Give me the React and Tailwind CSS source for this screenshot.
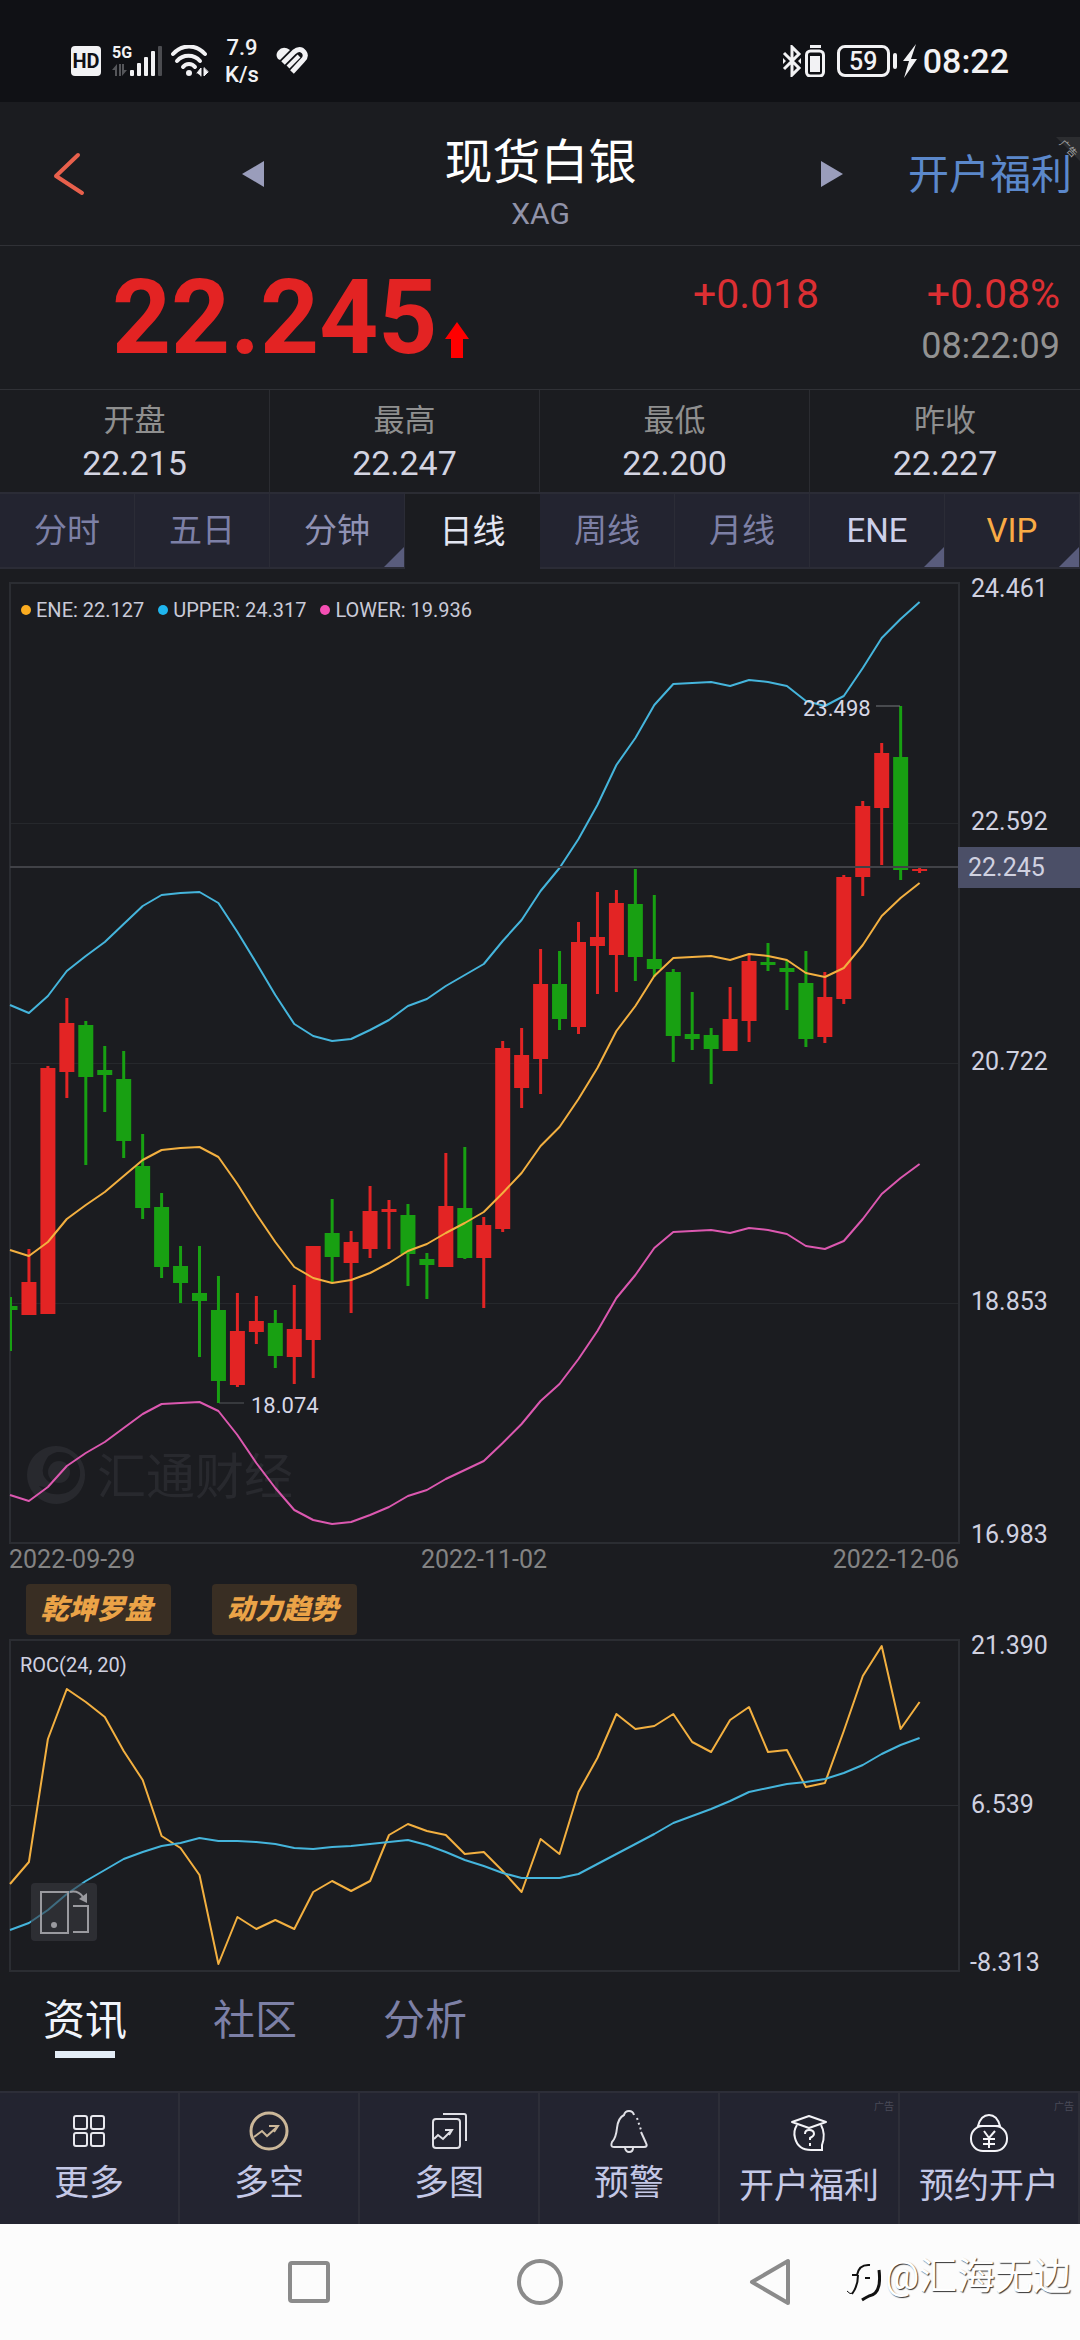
const STEP = 18.95;

// [high, body top, body bottom, low, rising]
const CANDLES = [
    [714, 723, 727, 768, 0], [666, 699, 732, 732, 1], [483, 485, 731, 731, 1], [415, 440, 489, 515, 1],
    [438, 442, 494, 582, 0], [463, 487, 492, 529, 0], [468, 496, 558, 575, 0], [551, 583, 625, 636, 0],
    [610, 624, 684, 695, 0], [663, 683, 700, 720, 0], [663, 710, 718, 774, 0], [693, 727, 798, 820, 0],
    [710, 748, 802, 804, 1], [713, 738, 749, 761, 1], [727, 740, 773, 785, 0], [702, 746, 774, 801, 1],
    [663, 663, 757, 795, 1], [616, 650, 674, 700, 0], [648, 659, 680, 730, 1], [603, 628, 666, 675, 1],
    [617, 626, 629, 666, 1], [621, 632, 671, 703, 0], [670, 676, 682, 716, 0], [570, 623, 684, 684, 1],
    [564, 625, 675, 676, 0], [634, 642, 675, 725, 1], [458, 465, 646, 649, 1], [445, 472, 505, 525, 1],
    [366, 401, 476, 511, 1], [368, 401, 436, 447, 0], [339, 359, 444, 451, 1], [309, 354, 363, 411, 1],
    [307, 320, 372, 409, 1], [286, 321, 374, 398, 0], [312, 376, 386, 394, 0], [386, 389, 453, 479, 0],
    [409, 451, 456, 467, 0], [445, 452, 466, 501, 0], [404, 436, 468, 468, 1], [372, 378, 438, 459, 1],
    [360, 379, 382, 388, 0], [377, 385, 389, 427, 0], [368, 400, 456, 464, 0], [389, 414, 454, 460, 1],
    [292, 294, 416, 421, 1], [218, 223, 294, 313, 1], [160, 170, 225, 282, 1], [123, 174, 287, 297, 0],
    [285, 286, 288, 290, 1],
];

const UPPER = [
    422, 430, 413, 388, 373, 359, 341, 323, 312, 310, 309, 320, 349, 380, 412, 441, 453, 458, 456, 447, 437, 423, 416,
    403, 392, 381, 358, 337, 308, 285, 256, 222, 182, 155, 122, 101, 100, 99, 103, 97, 99, 103, 118, 123, 113, 85, 55,
    36, 19,
];

const ENE = [
    667, 673, 659, 636, 622, 609, 593, 577, 567, 565, 564, 574, 601, 631, 659, 684, 695, 700, 697, 690, 680, 668, 661,
    650, 640, 629, 610, 590, 563, 544, 516, 485, 448, 423, 393, 375, 374, 373, 377, 371, 373, 377, 390, 394, 385, 362,
    333, 315, 300,
];

const LOWER = [
    912, 918, 904, 883, 870, 859, 845, 831, 821, 820, 819, 828, 852, 880, 905, 927, 937, 941, 939, 932, 924, 913, 907,
    896, 887, 878, 860, 841, 818, 801, 776, 748, 715, 692, 665, 649, 648, 647, 650, 645, 647, 651, 663, 666, 658, 636,
    611, 595, 581,
];

const ROC = [
    244, 222, 99, 49, 62, 77, 111, 140, 196, 208, 235, 324, 277, 289, 280, 289, 252, 241, 251, 241, 195, 184, 191, 195,
    214, 212, 231, 252, 199, 214, 152, 118, 74, 89, 86, 74, 102, 112, 80, 67, 112, 110, 147, 143, 91, 36, 6, 89, 62,
];

const ROC_MA = [
    290, 283, 270, 254, 241, 230, 219, 212, 206, 203, 198, 201, 201, 202, 204, 208, 209, 207, 206, 204, 202, 200, 205,
    212, 220, 226, 233, 238, 238, 238, 234, 224, 214, 204, 194, 183, 176, 169, 161, 152, 148, 144, 142, 139, 133, 125,
    114, 105, 98,
];

const STATS = [
    ['开盘', '22.215'],
    ['最高', '22.247'],
    ['最低', '22.200'],
    ['昨收', '22.227'],
];

const PERIODS = [
    { label: '分时' },
    { label: '五日' },
    { label: '分钟', more: true, color: 'text-[#9092b4]' },
    { label: '日线', active: true },
    { label: '周线' },
    { label: '月线' },
    { label: 'ENE', more: true, color: 'text-[#cdd0ea]' },
    { label: 'VIP', more: true, color: 'text-[#f9ab45]' },
];

const LEGEND = [
    ['ENE: 22.127', 'bg-[#fbac20]'],
    ['UPPER: 24.317', 'bg-[#1fb5ee]'],
    ['LOWER: 19.936', 'bg-[#f54fb4]'],
];

function toPoints(series) {
    return series.map((y, i) => `${(i * STEP).toFixed(1)},${y}`).join(' ');
}

function Line({ series, color }) {
    return <polyline points={toPoints(series)} fill="none" stroke={color} strokeWidth="2" strokeLinejoin="round" />;
}

function StatusBar() {
    return (
        <div className="flex h-[102px] items-center bg-[#101115] pt-5 pr-[71px] pl-[71px] text-[#f2f2f4]">
            <span className="flex size-[30px] items-center justify-center rounded bg-[#f2f2f4] text-xl font-bold text-[#101115]">
                HD
            </span>
            <div className="relative ml-[11px] h-8 w-[50px]">
                <span className="absolute top-0 left-0 text-base leading-4 font-bold">5G</span>
                <svg viewBox="0 0 50 32" className="h-8 w-[50px]">
                    <path d="M0 25 L5 19 V31 H3 V25 Z M7 19 H9 V31 H7 Z M10 19 V31 L15 25 H12 V19 Z" fill="#55565a" />
                    <rect x="18" y="25" width="4" height="6" rx="1" fill="currentColor" />
                    <rect x="25" y="18" width="4" height="13" rx="1" fill="currentColor" />
                    <rect x="32" y="12" width="4" height="19" rx="1" fill="currentColor" />
                    <rect x="39" y="6" width="4" height="25" rx="1" fill="currentColor" />
                    <rect x="46" y="1" width="4" height="30" rx="1" fill="#4b4c50" />
                </svg>
            </div>
            <svg viewBox="0 0 38 32" className="ml-[9px] h-8 w-[38px]" fill="none" stroke="currentColor" strokeLinecap="round">
                <path d="M2 9 C11 -1 25 -1 34 9" strokeWidth="4" />
                <path d="M6 16 C12 9 23 9 29 16" strokeWidth="4" />
                <path d="M12 22 C15 18 21 18 24 22" strokeWidth="4" />
                <circle cx="18" cy="28" r="3" fill="currentColor" stroke="none" />
                <path d="M26 28 L30 23 V31 M33 23 V31 L37 27 Z" fill="currentColor" strokeWidth="1" />
            </svg>
            <span className="ml-[15px] w-9 text-center text-[22px] leading-[27px] font-medium">
                7.9
                <br />
                K/s
            </span>
            <svg viewBox="0 0 32 28" className="ml-4 h-7 w-8" fill="none" stroke="currentColor">
                <path d="M2 12 Q-1 8 2 4 Q7 -2 14 3 L4 13 Z" fill="currentColor" stroke="none" />
                <path d="M7 16 L18 5 Q24 0 28 5 Q31 9 27 13 L16 25" strokeWidth="5" />
                <path d="M12 20 L23 9" strokeWidth="4" />
            </svg>
            <div className="ml-auto flex items-center">
                <svg viewBox="0 0 20 32" className="h-8 w-5" fill="none" stroke="currentColor" strokeWidth="3">
                    <path d="M2 8 L17 23 L10 30 V2 L17 9 L2 24" />
                    <path d="M1 13 L4 16 L1 19 Z M19 13 L16 16 L19 19 Z" fill="currentColor" stroke="none" />
                </svg>
                <svg viewBox="0 0 20 32" className="ml-[3px] h-8 w-5">
                    <rect x="5" y="0" width="11" height="3" fill="currentColor" />
                    <rect x="1.5" y="6" width="17" height="25" rx="4" fill="none" stroke="currentColor" strokeWidth="3" />
                    <rect x="5" y="11" width="10" height="16" fill="currentColor" />
                </svg>
                <span className="ml-3 flex h-8 w-[53px] items-center justify-center rounded-lg border-3 border-current text-[25px] leading-none font-medium">
                    59
                </span>
                <span className="ml-[3px] h-4 w-1 rounded-sm bg-current" />
                <svg viewBox="0 0 14 34" className="ml-[6px] h-[34px] w-[14px]" fill="currentColor">
                    <path d="M13 0 L0 17 H6 L1 34 L14 15 H8 Z" />
                </svg>
                <span className="ml-[6px] text-[34px] leading-none font-medium">08:22</span>
            </div>
        </div>
    );
}

function Header() {
    return (
        <header className="relative flex h-[144px] items-center border-b border-[#303136]">
            <div className="flex w-[264px] items-center justify-between pl-[53px]">
                <button aria-label="返回">
                    <svg viewBox="0 0 32 44" className="h-11 w-8" fill="none" stroke="#e8604c" strokeWidth="4" strokeLinecap="round">
                        <path d="M25 3 L3 24 L29 41" strokeLinejoin="round" />
                    </svg>
                </button>
                <button aria-label="上一个">
                    <svg viewBox="0 0 22 26" className="h-[26px] w-[22px]">
                        <path d="M22 0 V26 L0 13 Z" fill="#9a9dbb" />
                    </svg>
                </button>
            </div>
            <div className="flex-1 pt-6 pr-1 text-center">
                <h1 className="text-5xl leading-[56px] text-white">现货白银</h1>
                <p className="text-[30px] leading-[46px] text-[#9193a9]">XAG</p>
            </div>
            <div className="flex w-[259px] items-center justify-between pr-2">
                <button aria-label="下一个">
                    <svg viewBox="0 0 22 26" className="h-[26px] w-[22px]">
                        <path d="M0 0 V26 L22 13 Z" fill="#9a9dbb" />
                    </svg>
                </button>
                <a href="#benefits" className="pt-0.5 text-[41px] leading-[44px] text-[#5b88cb]">
                    开户福利
                </a>
            </div>
            <div className="absolute top-[35px] right-0 size-6">
                <svg viewBox="0 0 24 24" className="size-6">
                    <path d="M0 0 H24 V24 Z" fill="#2c2d30" />
                </svg>
                <span className="absolute top-[6px] left-[2px] rotate-45 text-[10px] leading-3 whitespace-nowrap text-[#a8a8a8]">
                    广告
                </span>
            </div>
        </header>
    );
}

function Quote() {
    return (
        <section className="flex h-[144px] items-center border-b border-[#303136] pr-5 pl-28">
            <strong className="text-[103px] leading-[120px] font-bold text-[#e32323]">22.245</strong>
            <svg viewBox="0 0 24 36" className="mt-11 ml-2 h-9 w-6">
                <path d="M12 0 L24 17 H18 V36 H6 V17 H0 Z" fill="#ff0000" />
            </svg>
            <div className="ml-auto grid grid-cols-[auto_auto] gap-x-[102px] pt-[5px] text-right">
                <span className="text-[41px] leading-[52px] text-[#dc2f33]">+0.018</span>
                <span className="text-[41px] leading-[52px] text-[#dc2f33]">+0.08%</span>
                <time className="col-start-2 text-4xl leading-[52px] text-[#929292]">08:22:09</time>
            </div>
        </section>
    );
}

function Stats() {
    return (
        <dl className="grid h-[102px] grid-cols-4 divide-x divide-[#2b2c31]">
            {STATS.map(([name, value]) => (
                <div key={name} className="pt-[9px] text-center">
                    <dt className="text-[31px] leading-[44px] text-[#8f8f8f]">{name}</dt>
                    <dd className="text-[34px] leading-10 text-[#d3d4e2]">{value}</dd>
                </div>
            ))}
        </dl>
    );
}

function PeriodTabs() {
    return (
        <nav className="grid grid-cols-8">
            {PERIODS.map(({ label, active, more, color }) => (
                <button
                    key={label}
                    className={
                        active
                            ? 'relative h-[77px] border-t-2 border-[#2b2c33] text-[33px] text-[#e3e6f2]'
                            : `relative h-[77px] border-y-2 border-r border-[#2b2c36] bg-[#232430] text-[33px] ${color || 'text-[#7d80a6]'}`
                    }
                >
                    {label}
                    {more && (
                        <svg viewBox="0 0 20 20" className="absolute right-0 bottom-0 size-5">
                            <path d="M20 0 V20 H0 Z" fill="#595c7c" />
                        </svg>
                    )}
                </button>
            ))}
        </nav>
    );
}

function PriceChart() {
    const ticks = [
        ['24.461', 14],
        ['22.592', 247],
        ['20.722', 487],
        ['18.853', 727],
        ['16.983', 960],
    ];

    return (
        <section className="relative">
            <div className="absolute top-[27px] left-[21px] flex gap-[14px]">
                {LEGEND.map(([label, dot]) => (
                    <span key={label} className="flex items-center gap-[5px] text-xl leading-7 text-[#c9cad8]">
                        <i className={`size-[10px] rounded-full ${dot}`} />
                        {label}
                    </span>
                ))}
            </div>
            <svg viewBox="0 0 1080 976" className="block w-full overflow-visible">
                <g fill="#28292e" stroke="none">
                    <path
                        fillRule="evenodd"
                        d="M56 877 a29 29 0 1 0 0.1 0 Z M57 883 a21 21 0 0 1 4 42 q-14 2 -22 -8 q10 3 13 -2 q-14 -8 -7 -22 q3 -8 12 -10 Z"
                    />
                    <circle cx="59" cy="903" r="11" />
                    <text x="97" y="925" fontSize="49" className="font-['Noto_Sans_CJK_SC',sans-serif]">
                        汇通财经
                    </text>
                </g>
                <g transform="translate(10 14)">
                    <g stroke="#26282c" strokeWidth="1">
                        <path d="M0 240.5 H949 M0 480.5 H949 M0 720.5 H949" />
                    </g>
                    <rect x="0" y="0" width="949" height="960" fill="none" stroke="#2b2d32" strokeWidth="2" />
                    {CANDLES.map(([high, top, bottom, low, up], i) => {
                        const x = i * STEP;
                        const left = Math.max(x - 7.5, 0);
                        return (
                            <g key={i} fill={up ? '#e32424' : '#18a012'}>
                                <rect x={Math.max(x - 1.5, 0)} y={high} width={i ? 3 : 2} height={low - high} />
                                <rect x={left} y={top} width={x + 7.5 - left} height={bottom - top} />
                            </g>
                        );
                    })}
                    <Line series={UPPER} color="#45b5dc" />
                    <Line series={ENE} color="#f3b040" />
                    <Line series={LOWER} color="#dc58b0" />
                    <path d="M0 284 H949" stroke="#414247" strokeWidth="2" />
                    <path d="M866 123 H890" stroke="#77787c" strokeWidth="1" />
                    <path d="M209 820 H234" stroke="#55565a" strokeWidth="1" />
                    <g fill="#d6d7e6" fontSize="22">
                        <text x="793" y="133">
                            23.498
                        </text>
                        <text x="241" y="830">
                            18.074
                        </text>
                    </g>
                </g>
                <g fill="#d0d1e0" fontSize="25">
                    {ticks.map(([label, y]) => (
                        <text key={label} x="971" y={y + 14}>
                            {label}
                        </text>
                    ))}
                    <rect x="958" y="278" width="122" height="41" fill="#4b4f67" />
                    <text x="968" y="307">
                        22.245
                    </text>
                </g>
            </svg>
            <div className="mr-[121px] ml-[9px] flex justify-between text-[25px] leading-[30px] text-[#838383]">
                <time>2022-09-29</time>
                <time>2022-11-02</time>
                <time>2022-12-06</time>
            </div>
        </section>
    );
}

function RocChart() {
    return (
        <section className="relative">
            <span className="absolute top-4 left-5 text-xl leading-7 text-[#d0d1e0]">ROC(24, 20)</span>
            <svg viewBox="0 0 1080 342" className="block w-full overflow-visible">
                <g transform="translate(10 5)">
                    <path d="M0 165.5 H949" stroke="#2b2d32" strokeWidth="1" />
                    <rect x="0" y="0" width="949" height="331" fill="none" stroke="#2b2d32" strokeWidth="2" />
                    <Line series={ROC} color="#f3b040" />
                    <Line series={ROC_MA} color="#45b5dc" />
                </g>
                <g fill="#d0d1e0" fontSize="25">
                    <text x="971" y="19">
                        21.390
                    </text>
                    <text x="971" y="178">
                        6.539
                    </text>
                    <text x="970" y="336">
                        -8.313
                    </text>
                </g>
            </svg>
            <button aria-label="切换横屏" className="absolute bottom-9 left-[31px] rounded bg-[#3a3a41]/60">
                <svg viewBox="0 0 66 58" className="h-[58px] w-[66px]" fill="none" stroke="#9a9a9f" strokeWidth="2">
                    <rect x="10" y="9" width="27" height="41" />
                    <path d="M42 23 H57 V49 H42" />
                    <path d="M39 9 Q47 7 52 14" />
                    <path d="M56 10 V20 L48 16 Z" fill="#9a9a9f" stroke="none" />
                    <circle cx="23" cy="42" r="3" fill="#9a9a9f" stroke="none" />
                </svg>
            </button>
        </section>
    );
}

function GridIcon() {
    return (
        <svg viewBox="0 0 40 40" className="size-10" fill="none" stroke="#e8e8ee" strokeWidth="2">
            <rect x="5" y="5" width="13" height="13" rx="2" />
            <rect x="22" y="5" width="13" height="13" rx="2" />
            <rect x="5" y="22" width="13" height="13" rx="2" />
            <rect x="22" y="22" width="13" height="13" rx="2" />
        </svg>
    );
}

function TrendIcon() {
    return (
        <svg viewBox="0 0 40 40" className="size-10" fill="none" stroke="#cbb799" strokeWidth="3">
            <circle cx="20" cy="20" r="18" />
            <path d="M5 26 L13 20 L18 25 L28 16 M20 15 H29 L25 21" strokeWidth="2" />
        </svg>
    );
}

function ChartsIcon() {
    return (
        <svg viewBox="0 0 40 40" className="size-10" fill="none" stroke="#e0e0e6" strokeWidth="2">
            <rect x="4" y="8" width="27" height="29" rx="3" />
            <path d="M14 3 H35 Q37 3 37 5 V30" />
            <path d="M5 28 L9 24 L14 28 L22 20 M16 19 H23 L20 24" />
        </svg>
    );
}

function BellIcon() {
    return (
        <svg viewBox="0 0 40 40" className="size-10 overflow-visible" fill="none" stroke="#e0e0e6" strokeWidth="2">
            <path d="M25 4 Q24 0 20 0 Q16 0 15 4 Q9 7 8 17 Q7 27 3 31 Q1 36 5 36 H35 Q39 36 37 32 L32 21" />
            <path d="M16 37 Q17 41 20 41 Q24 41 24 37" />
            <path d="M28 7 L32 19" strokeDasharray="2 3" />
        </svg>
    );
}

function CapIcon() {
    return (
        <svg viewBox="0 0 40 40" className="size-10" fill="none" stroke="#f4f4f8" strokeWidth="2">
            <path d="M20 2 L37 8 L20 14 L3 8 Z" strokeLinejoin="round" />
            <path d="M8 11 Q4 17 6 24 Q9 36 22 36 L33 36 V31 Q37 20 32 11" />
            <path d="M16 20 Q16 16 20 16 Q25 16 25 20 Q25 22 21 24 V26 M21 29 V32" />
        </svg>
    );
}

function PurseIcon() {
    return (
        <svg viewBox="0 0 40 40" className="size-10" fill="none" stroke="#f4f4f8" strokeWidth="2">
            <path d="M9 12 Q12 1 20 1 Q28 1 31 12 Z" />
            <rect x="2" y="12" width="36" height="25" rx="12" />
            <path d="M15 17 L20 24 L26 17 M14 25 H26 M14 30 H26 M20 24 V34" />
        </svg>
    );
}

const ACTIONS = [
    { label: '更多', icon: GridIcon },
    { label: '多空', icon: TrendIcon },
    { label: '多图', icon: ChartsIcon },
    { label: '预警', icon: BellIcon },
    { label: '开户福利', icon: CapIcon, ad: true },
    { label: '预约开户', icon: PurseIcon, ad: true },
];

function ActionBar() {
    return (
        <nav className="grid grid-cols-6 border-t-2 border-[#2d2e38] bg-[#232430]">
            {ACTIONS.map(({ label, icon: Icon, ad }) => (
                <button
                    key={label}
                    className={`relative flex h-[131px] flex-col items-center border-r-2 border-[#2d2e38] ${ad ? 'pt-[21px]' : 'pt-[18px]'}`}
                >
                    <Icon />
                    <span className="mt-[11px] text-[35px] leading-[44px] whitespace-nowrap text-[#c4c8e6]">{label}</span>
                    {ad && <small className="absolute top-2 right-1 text-[10px] leading-3 text-[#4a4b58]">广告</small>}
                </button>
            ))}
        </nav>
    );
}

function SystemNav() {
    return (
        <footer className="relative flex h-[116px] items-center justify-center gap-[183px] bg-[#fcfcfc]">
            <button aria-label="最近任务">
                <svg viewBox="0 0 48 48" className="size-12" fill="none" stroke="#8b8b8b" strokeWidth="4">
                    <rect x="5" y="5" width="38" height="38" rx="2" />
                </svg>
            </button>
            <button aria-label="主屏幕">
                <svg viewBox="0 0 48 48" className="size-12" fill="none" stroke="#8b8b8b" strokeWidth="4">
                    <circle cx="24" cy="24" r="21" />
                </svg>
            </button>
            <button aria-label="后退">
                <svg viewBox="0 0 48 48" className="size-12" fill="none" stroke="#8b8b8b" strokeWidth="4">
                    <path d="M41 3 V45 L5 24 Z" strokeLinejoin="round" />
                </svg>
            </button>
            <div className="absolute top-[26px] right-[9px] flex items-center">
                <svg viewBox="0 0 36 44" className="mt-2 h-11 w-9" fill="none" stroke="#111111" strokeWidth="2">
                    <path d="M7 17 H12 Q14 6 25 7 M13 17 Q13 28 7 36 M20 20 H25" />
                    <path d="M34 12 Q37 36 24 38 Q20 40 17 42" strokeWidth="3" />
                    <path d="M2 33 Q5 37 8 35" strokeWidth="1" />
                </svg>
                <span className="ml-1 text-[38px] leading-[52px] text-white [text-shadow:1px_1px_1px_#333333]">@汇海无边</span>
            </div>
        </footer>
    );
}

export default function App() {
    return (
        <main className="bg-[#1b1c20] font-['Roboto','Noto_Sans_CJK_SC',sans-serif]">
            <StatusBar />
            <Header />
            <Quote />
            <Stats />
            <PeriodTabs />
            <PriceChart />
            <div className="mt-[9px] flex gap-[41px] pl-[26px]">
                {['乾坤罗盘', '动力趋势'].map((label) => (
                    <button
                        key={label}
                        className="h-[51px] w-[145px] rounded bg-[#392e23] pr-1 text-[28px] font-black text-[#eba347] italic"
                    >
                        {label}
                    </button>
                ))}
            </div>
            <RocChart />
            <nav className="flex gap-[86px] px-[43px] pt-[14px] pb-[33px] text-[42px] leading-[60px]">
                <button className="flex flex-col items-center text-[#f0f4fb]">
                    资讯
                    <span className="h-[7px] w-[60px] bg-[#e4edf7]" />
                </button>
                <button className="self-start text-[#7d80a6]">社区</button>
                <button className="self-start text-[#7d80a6]">分析</button>
            </nav>
            <ActionBar />
            <SystemNav />
        </main>
    );
}
